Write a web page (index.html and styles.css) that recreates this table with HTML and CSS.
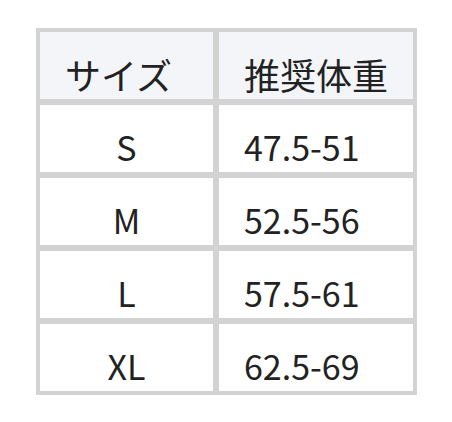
FILE: index.html
```
<!DOCTYPE html>
<html lang="ja">
<head>
<meta charset="utf-8">
<link rel="stylesheet" href="styles.css">
</head>
<body>
<div class="size-table">
  <div class="cell head size">サイズ</div>
  <div class="cell head weight">推奨体重</div>
  <div class="cell size">S</div>
  <div class="cell weight">47.5-51</div>
  <div class="cell size">M</div>
  <div class="cell weight">52.5-56</div>
  <div class="cell size">L</div>
  <div class="cell weight">57.5-61</div>
  <div class="cell size">XL</div>
  <div class="cell weight">62.5-69</div>
</div>
</body>
</html>
```
FILE: styles.css
```
html, body {
  margin: 0;
  padding: 0;
  background: #ffffff;
}
body {
  padding: 28px 0 0 36px;
  font-family: "Noto Sans CJK JP", "Noto Sans", sans-serif;
  color: #222222;
}
.size-table {
  display: inline-grid;
  grid-template-columns: 173px 194px;
  grid-auto-rows: 67px;
  gap: 6px;
  padding: 4px;
  background: #d3d3d3;
}
.cell {
  background: #ffffff;
  font-size: 34px;
  line-height: 49px;
  display: flex;
  align-items: flex-end;
  padding-bottom: 1px;
  box-sizing: border-box;
}
.cell.head {
  background: #f4f5f9;
  font-size: 36px;
  line-height: 50px;
  padding-bottom: 0;
}
.cell.size {
  justify-content: center;
}
.cell.weight {
  padding-left: 25px;
}
.cell.head.size {
  justify-content: flex-start;
  padding-left: 25px;
}
```
